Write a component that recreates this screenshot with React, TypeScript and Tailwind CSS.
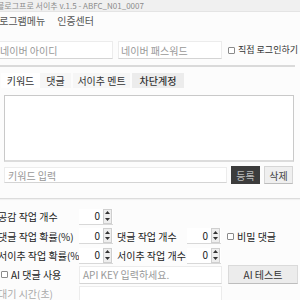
import React from "react";

function Check() {
  return <span className="inline-block w-[7px] h-[7px] border border-[#8a8a8a] bg-white rounded-[1px] shrink-0" />;
}

function Spin() {
  return (
    <div className="w-[34px] h-[16px] bg-white border-b border-[#d8d8d8] flex items-center">
      <span className="flex-1 text-right pr-[3px] text-[10px] leading-none text-[#222]">0</span>
      <div className="w-[9px] h-[15px] flex flex-col bg-[#eeeeee] border border-[#cfcfcf] mr-[1px]">
        <div className="flex-1 flex items-center justify-center">
          <svg width="5" height="3" viewBox="0 0 5 3"><path d="M0 3 L2.5 0 L5 3 Z" fill="#333" /></svg>
        </div>
        <div className="flex-1 flex items-center justify-center">
          <svg width="5" height="3" viewBox="0 0 5 3"><path d="M0 0 L2.5 3 L5 0 Z" fill="#333" /></svg>
        </div>
      </div>
    </div>
  );
}

export default function App() {
  return (
    <div className="w-[300px] h-[300px] overflow-hidden bg-[#fcfcfc] text-[#222] font-['Noto_Sans_CJK_KR','Noto_Sans',sans-serif]">
      <div className="h-[12px] bg-[#f0f0f0] border-b border-[#e4e4e4] flex items-center">
        <span className="ml-[-3px] text-[8px] leading-none text-[#8c8c8c] whitespace-nowrap">블로그프로 서이추 v.1.5 - ABFC_N01_0007</span>
      </div>
      <div className="h-[17px] flex items-center gap-[12px] text-[10px] text-[#555] whitespace-nowrap">
        <span className="ml-[-10px]">프로그램메뉴</span>
        <span>인증센터</span>
      </div>
      <div className="mt-[12px] flex items-center h-[18px] text-[10px] whitespace-nowrap">
        <div className="ml-[-6px] w-[119px] h-[18px] shrink-0 bg-white border border-[#ececec] border-b-[#d4d4d4] flex items-center pl-[5px] text-[#999]">네이버 아이디</div>
        <div className="ml-[5px] w-[104px] h-[18px] shrink-0 bg-white border border-[#ececec] border-b-[#d4d4d4] flex items-center pl-[2px] text-[#999]">네이버 패스워드</div>
        <div className="ml-[6px] flex items-center gap-[3px] text-[#333] text-[9px] shrink-0"><Check />직접 로그인하기</div>
      </div>
      <div className="mt-[6px] h-[2px] bg-[#dadada] mr-[5px]" />
      <div className="mt-[6px] flex text-[10px] h-[15px] items-stretch whitespace-nowrap text-[#333]">
        <div className="ml-[1px] w-[39px] bg-white flex items-center justify-center">키워드</div>
        <div className="w-[31px] bg-[#f6f6f6] flex items-center justify-center">댓글</div>
        <div className="ml-[2px] w-[57px] bg-[#f6f6f6] flex items-center justify-center">서이추 멘트</div>
        <div className="ml-[2px] w-[52px] bg-[#ececec] flex items-center justify-center font-medium">차단계정</div>
      </div>
      <div className="ml-[4px] mr-[6px] mt-[7px] h-[67px] bg-white border border-[#c9c9c9] border-b-2 border-b-[#dcdcdc]" />
      <div className="mt-[4px] ml-[4px] flex items-center h-[18px] text-[10px] whitespace-nowrap">
        <div className="w-[223px] h-[16px] bg-white border border-[#ececec] border-b-[#d4d4d4] flex items-center pl-[3px] text-[#999]">키워드 입력</div>
        <div className="ml-[4px] w-[29px] h-[18px] bg-[#3c3c3c] flex items-center justify-center text-[#bdbdbd]">등록</div>
        <div className="ml-[4px] w-[29px] h-[18px] bg-[#efefef] border border-[#d6d6d6] border-b-[#bdbdbd] flex items-center justify-center text-[#444]">삭제</div>
      </div>
      <div className="mt-[14px] h-[1px] bg-[#dcdcdc] shadow-[0_1px_1px_#eeeeee]" />
      <div className="mt-[8px] flex flex-col text-[10px] text-[#222] whitespace-nowrap">
        <div className="h-[19px] flex items-center">
          <span className="ml-[-2px] w-[81px]">공감 작업 개수</span>
          <Spin />
        </div>
        <div className="h-[20px] flex items-center">
          <span className="ml-[-2px] w-[81px]">댓글 작업 확률(%)</span>
          <Spin />
          <span className="ml-[4px] w-[70px]">댓글 작업 개수</span>
          <Spin />
          <span className="ml-[6px] flex items-center gap-[3px]"><Check />비밀 댓글</span>
        </div>
        <div className="h-[19px] flex items-center">
          <span className="ml-[-2px] w-[81px]">서이추 작업 확률(%)</span>
          <Spin />
          <span className="ml-[4px] w-[70px]">서이추 작업 개수</span>
          <Spin />
        </div>
        <div className="h-[19px] flex items-center">
          <span className="ml-[1px] w-[78px] flex items-center gap-[3px]"><Check />AI 댓글 사용</span>
          <div className="w-[143px] h-[18px] bg-white border border-[#ececec] border-b-[#d4d4d4] flex items-center pl-[3px] text-[#999]">API KEY 입력하세요.</div>
          <div className="ml-[6px] w-[70px] h-[19px] bg-[#ececec] border border-[#dadada] border-b-[#bdbdbd] flex items-center justify-center text-[#333]">AI 테스트</div>
        </div>
        <div className="h-[19px] flex items-center">
          <span className="ml-[-2px] w-[81px] text-[#aaa]">대기 시간(초)</span>
          <div className="w-[143px] h-[16px] bg-white border border-[#ececec]" />
        </div>
      </div>
    </div>
  );
}
